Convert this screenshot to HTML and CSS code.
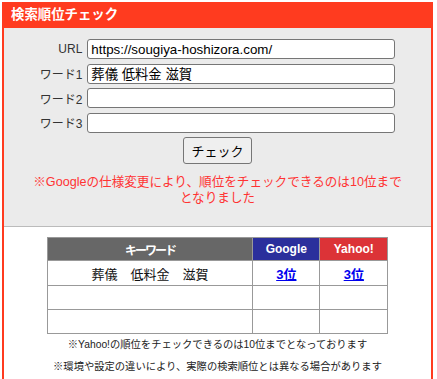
FILE: index.html
```html
<!DOCTYPE html>
<html lang="ja">
<head>
    <meta charset="UTF-8">
    <title>検索順位チェック</title>
    <link rel="stylesheet" href="styles.css">
</head>
<body>
    <div class="rank-box">
        <h2 class="rank-title">検索順位チェック</h2>

        <!-- 入力フォーム -->
        <form class="rank-form" onsubmit="return false;">
            <div class="fields">
                <label for="url">URL</label>
                <input type="text" id="url" value="https://sougiya-hoshizora.com/">
                <label for="word1">ワード1</label>
                <input type="text" id="word1" value="葬儀 低料金 滋賀">
                <label for="word2">ワード2</label>
                <input type="text" id="word2">
                <label for="word3">ワード3</label>
                <input type="text" id="word3">
            </div>
            <div class="actions">
                <button type="submit">チェック</button>
            </div>
            <p class="notice">※Googleの仕様変更により、順位をチェックできるのは10位までとなりました</p>
        </form>

        <!-- 結果 -->
        <div class="rank-result">
            <table class="rank-table">
                <thead>
                    <tr>
                        <th class="th-word">キーワード</th>
                        <th class="th-google">Google</th>
                        <th class="th-yahoo">Yahoo!</th>
                    </tr>
                </thead>
                <tbody>
                    <tr>
                        <td>葬儀　低料金　滋賀</td>
                        <td><a href="#">3位</a></td>
                        <td><a href="#">3位</a></td>
                    </tr>
                    <tr>
                        <td></td>
                        <td></td>
                        <td></td>
                    </tr>
                    <tr>
                        <td></td>
                        <td></td>
                        <td></td>
                    </tr>
                </tbody>
            </table>
            <p class="note">※Yahoo!の順位をチェックできるのは10位までとなっております</p>
            <p class="note">※環境や設定の違いにより、実際の検索順位とは異なる場合があります</p>
        </div>
    </div>
</body>
</html>
```

FILE: styles.css
```css
body {
    margin: 2px 0 0 2px;
    font-family: "Liberation Sans", "Noto Sans CJK JP", sans-serif;
    color: #333;
    background: #fff;
}
.rank-box {
    width: 431px;
    box-sizing: border-box;
    border: 2px solid #ff3b1f;
    min-height: 400px;
}
.rank-title {
    margin: 0;
    height: 24px;
    line-height: 22px;
    padding-left: 7px;
    background-color: #ff3b1f;
    color: #fff;
    font-size: 13.4px;
    font-weight: bold;
}
.rank-form {
    margin: 0;
    padding: 11px 24px 20px;
    background-color: #ebebeb;
    border-bottom: 1px solid #bbb;
}
.fields {
    display: grid;
    grid-template-columns: auto 308px;
    justify-content: center;
    column-gap: 5px;
    row-gap: 4.67px;
    align-items: center;
}
.fields label {
    text-align: right;
    font-size: 12px;
    color: #333;
}
.fields input {
    height: 20px;
    box-sizing: border-box;
    margin: 0;
    padding: 0 3px;
    border: 1px solid #767676;
    border-radius: 3px;
    background: #fff;
    font-family: "Liberation Sans", "Noto Sans CJK JP", sans-serif;
    font-size: 13.33px;
    color: #000;
}
.actions {
    display: flex;
    justify-content: center;
    margin-top: 4px;
}
.actions button {
    width: 69px;
    height: 27px;
    padding: 0;
    border: 1px solid #767676;
    border-radius: 3px;
    background-color: #efefef;
    font-family: "Liberation Sans", "Noto Sans CJK JP", sans-serif;
    font-size: 13px;
    color: #000;
}
.notice {
    margin: 10.5px 0 0;
    text-align: center;
    line-height: 16px;
    font-size: 12.6px;
    color: #ff3333;
}
.rank-result {
    padding-top: 10px;
}
.rank-table {
    width: 80%;
    margin: 0 auto;
    border-collapse: collapse;
}
.rank-table th,
.rank-table td {
    border: 1px solid #999;
    text-align: center;
    padding: 0;
}
.rank-table th {
    height: 22px;
    color: #fff;
    font-size: 12px;
    font-weight: bold;
}
.rank-table td {
    height: 23.3px;
    font-size: 13px;
    color: #111;
}
.th-word {
    background-color: #676767;
    letter-spacing: -2px;
}
.th-google {
    width: 66px;
    background-color: #2b2f9c;
}
.th-yahoo {
    width: 67px;
    background-color: #dc3337;
}
.rank-table a {
    color: #0000ee;
    font-weight: bold;
}
.note {
    margin: 6px 0 0;
    text-align: center;
    line-height: 16px;
    font-size: 10.3px;
    color: #222;
}
.rank-result .note:first-of-type {
    margin-top: 3px;
}
```
